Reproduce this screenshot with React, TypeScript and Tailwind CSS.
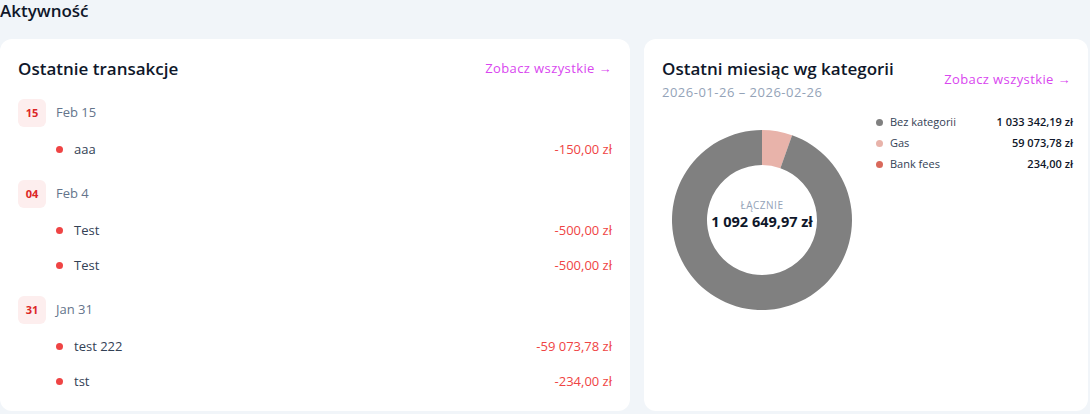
import React from "react";

const font = { fontFamily: '"Open Sans", "Noto Sans", sans-serif' };

type Tx = { name: string; amount: string };
type Group = { day: string; label: string; items: Tx[] };

const groups: Group[] = [
  { day: "15", label: "Feb 15", items: [{ name: "aaa", amount: "-150,00 zł" }] },
  {
    day: "04",
    label: "Feb 4",
    items: [
      { name: "Test", amount: "-500,00 zł" },
      { name: "Test", amount: "-500,00 zł" },
    ],
  },
  {
    day: "31",
    label: "Jan 31",
    items: [
      { name: "test 222", amount: "-59 073,78 zł" },
      { name: "tst", amount: "-234,00 zł" },
    ],
  },
];

const legend = [
  { name: "Bez kategorii", value: "1 033 342,19 zł", color: "#808080", v: 1033342.19 },
  { name: "Gas", value: "59 073,78 zł", color: "#e8b3aa", v: 59073.78 },
  { name: "Bank fees", value: "234,00 zł", color: "#d9695b", v: 234 },
];

function Donut() {
  const total = legend.reduce((s, l) => s + l.v, 0);
  const R = 90;
  const r = 55;
  const cx = 90;
  const cy = 90;
  let start = 0;
  const order = [legend[1], legend[2], legend[0]];
  const paths = order.map((l, i) => {
    const a0 = (start / total) * Math.PI * 2;
    start += l.v;
    const a1 = (start / total) * Math.PI * 2;
    const large = a1 - a0 > Math.PI ? 1 : 0;
    const p = (rad: number, a: number) => [cx + rad * Math.sin(a), cy - rad * Math.cos(a)];
    const [x0, y0] = p(R, a0);
    const [x1, y1] = p(R, a1);
    const [x2, y2] = p(r, a1);
    const [x3, y3] = p(r, a0);
    const d = `M${x0} ${y0} A${R} ${R} 0 ${large} 1 ${x1} ${y1} L${x2} ${y2} A${r} ${r} 0 ${large} 0 ${x3} ${y3} Z`;
    return <path key={i} d={d} fill={l.color} />;
  });
  return (
    <div className="relative w-[180px] h-[180px]">
      <svg width="180" height="180" viewBox="0 0 180 180">
        {paths}
      </svg>
      <div className="absolute inset-0 flex flex-col items-center justify-center">
        <div className="text-[10px] tracking-[0.5px] text-[#94a3b8] leading-none mt-[-10px]">ŁĄCZNIE</div>
        <div className="text-[14.5px] font-bold text-[#0f172a] mt-[5px] leading-none">1 092 649,97 zł</div>
      </div>
    </div>
  );
}

export default function App() {
  return (
    <div className="w-[1090px] h-[414px] bg-[#f1f5f9] overflow-hidden" style={font}>
      <h2 className="text-[17px] font-semibold text-[#0f172a] h-[26px] leading-[22px]">Aktywność</h2>
      <div className="flex gap-[14px] mt-[13px]">
        <div className="w-[630px] h-[372px] bg-white rounded-[12px] px-[18px] pt-[18px]">
          <div className="flex items-center justify-between h-[24px]">
            <div className="text-[17px] font-semibold text-[#0f172a]">Ostatnie transakcje</div>
            <div className="text-[13px] tracking-[0.4px] text-[#d946ef]">Zobacz wszystkie →</div>
          </div>
          <div className="mt-[18px] flex flex-col gap-[13px]">
            {groups.map((g, gi) => (
              <div key={gi}>
                <div className="flex items-center h-[28px]">
                  <div className="w-[28px] h-[28px] rounded-[6px] bg-[#fdeeee] flex items-center justify-center text-[11px] font-bold text-[#dc2626]">
                    {g.day}
                  </div>
                  <div className="ml-[10px] text-[13px] text-[#64748b]">{g.label}</div>
                </div>
                <div className="mt-[5px]">
                  {g.items.map((it, ii) => (
                    <div key={ii} className="flex items-center h-[35px] pl-[38px]">
                      <span className="w-[7px] h-[7px] rounded-full bg-[#ef4444]" />
                      <span className="ml-[11px] text-[13px] text-[#334155]">{it.name}</span>
                      <span className="ml-auto text-[13px] text-[#ef4444]">{it.amount}</span>
                    </div>
                  ))}
                </div>
              </div>
            ))}
          </div>
        </div>
        <div className="w-[444px] h-[372px] bg-white rounded-[12px] px-[18px] pt-[18px]">
          <div className="flex items-center justify-between">
            <div>
              <div className="text-[17px] font-semibold text-[#0f172a] leading-[24px]">Ostatni miesiąc wg kategorii</div>
              <div className="text-[13px] tracking-[0.5px] text-[#94a3b8] leading-[20px] mt-[1px]">2026-01-26 – 2026-02-26</div>
            </div>
            <div className="text-[13px] tracking-[0.4px] text-[#d946ef] mr-[-1px]">Zobacz wszystkie →</div>
          </div>
          <div className="flex mt-[10px]">
            <div className="ml-[10px] mt-[18px]">
              <Donut />
            </div>
            <div className="flex-1 ml-[24px] mr-[-3px] flex flex-col">
              {legend.map((l, i) => (
                <div key={i} className="flex items-center h-[21px]">
                  <span className="w-[7px] h-[7px] rounded-full" style={{ backgroundColor: l.color }} />
                  <span className="ml-[7px] text-[11px] text-[#334155]">{l.name}</span>
                  <span className="ml-auto text-[11px] font-semibold text-[#0f172a]">{l.value}</span>
                </div>
              ))}
            </div>
          </div>
        </div>
      </div>
    </div>
  );
}
